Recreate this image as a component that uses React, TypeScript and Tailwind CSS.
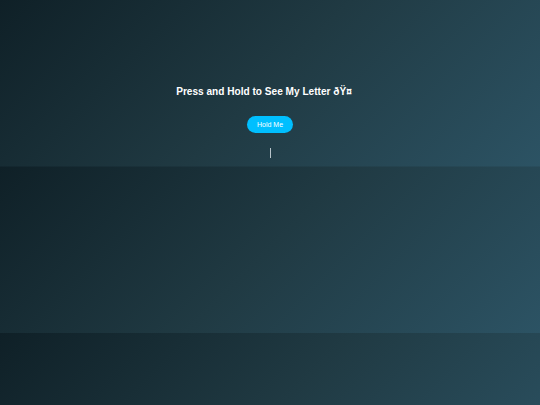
import React from "react";

export default function App() {
  return (
    <div
      className="w-[540px] h-[405px] overflow-hidden bg-[linear-gradient(135deg,#0f2027,#203a43,#2c5364)] bg-[length:100%_166.5px] bg-repeat-y text-center text-white"
      style={{ fontFamily: '"Liberation Sans", Arial, sans-serif' }}
    >
      <div className="flex flex-col items-center pt-[86px]">
        <h1 className="text-[10.1px] leading-[12px] font-bold text-white">
          Press and Hold to See My Letter ðŸ¤<span className="inline-block w-[12px]"></span>
        </h1>
        <button className="mt-[18px] w-[46px] h-[17px] rounded-full bg-[#00bfff] text-white text-[7px] leading-[17px]">
          Hold Me
        </button>
        <div className="mt-[15px] w-px h-[9.5px] bg-[#b8c4ca]"></div>
      </div>
    </div>
  );
}
